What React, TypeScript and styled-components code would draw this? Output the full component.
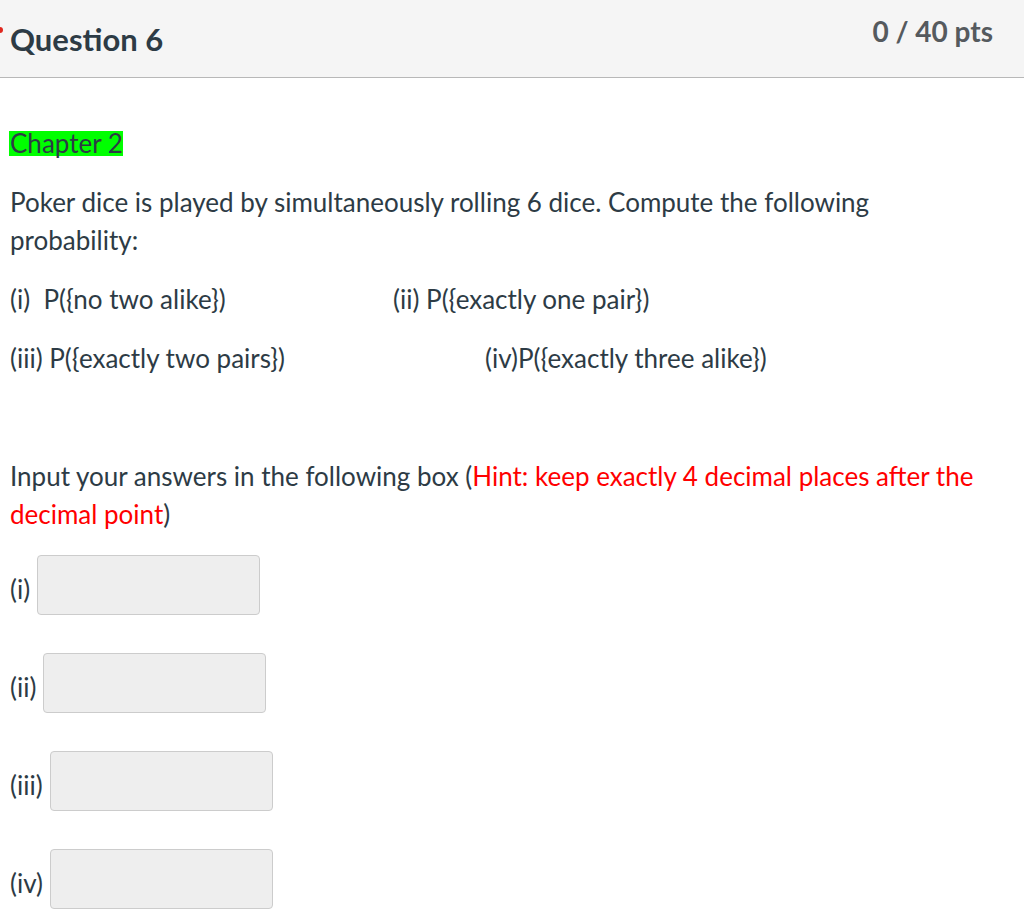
import React from 'react';
import styled, { createGlobalStyle } from 'styled-components';

const GlobalStyle = createGlobalStyle`
  body {
    margin: 0;
    background: #fff;
    font-family: Lato, 'Open Sans', sans-serif;
    color: #2d3b45;
  }
`;

const Header = styled.div`
  position: relative;
  height: 77px;
  background: #f5f5f5;
  border-bottom: 1px solid #b8b8b8;
  display: flex;
  justify-content: space-between;
  align-items: flex-start;
  padding: 0 31px 0 10px;
`;

const Flag = styled.span`
  position: absolute;
  left: -3px;
  top: 27px;
  width: 6px;
  height: 6px;
  border-radius: 50%;
  background: #e0281f;
`;

const Title = styled.h2`
  margin: 0;
  padding-top: 21px;
  font-size: 31px;
  font-weight: 700;
  line-height: 36px;
  color: #2d3b45;
`;

const Points = styled.div`
  padding-top: 13px;
  font-size: 28px;
  font-weight: 700;
  line-height: 36px;
  color: #555a5e;
`;

const Body = styled.div`
  padding: 46px 30px 0 10px;
  font-size: 26px;
  line-height: 38px;
`;

const Para = styled.p`
  margin: 0 0 21px;
  min-height: 38px;
`;

const Highlight = styled.span`
  display: inline-block;
  background: #00ff00;
  line-height: 25px;
  margin-left: -1px;
  padding-left: 1px;
`;

const Red = styled.span`
  color: #ff0000;
`;

const Cell = styled.span<{ $width: number }>`
  display: inline-block;
  width: ${(p) => p.$width}px;
`;

const Answers = styled.div`
  padding-top: 1px;
`;

const AnswerRow = styled.div`
  display: flex;
  align-items: center;
  gap: 7px;
  margin-bottom: 38px;
`;

const Label = styled.span`
  padding-top: 8px;
`;

const AnswerBox = styled.input`
  width: 223px;
  height: 60px;
  box-sizing: border-box;
  background: #eeeeee;
  border: 1px solid #cccccc;
  border-radius: 4px;
  font-family: inherit;
  font-size: 20px;
  padding: 0 10px;
`;

const answers = ['(i)', '(ii)', '(iii)', '(iv)'];

export default function App() {
  return (
    <>
      <GlobalStyle />
      <Header>
        <Flag />
        <Title>Question 6</Title>
        <Points>0 / 40 pts</Points>
      </Header>
      <Body>
        <Para>
          <Highlight>Chapter 2</Highlight>
        </Para>
        <Para>
          Poker dice is played by simultaneously rolling 6 dice. Compute the following
          probability:
        </Para>
        <Para>
          <Cell $width={383}>(i)&nbsp; P({'{'}no two alike{'}'})</Cell>
          (ii) P({'{'}exactly one pair{'}'})
        </Para>
        <Para>
          <Cell $width={475}>(iii) P({'{'}exactly two pairs{'}'})</Cell>
          (iv)P({'{'}exactly three alike{'}'})
        </Para>
        <Para />
        <Para>
          Input your answers in the following box (
          <Red>Hint: keep exactly 4 decimal places after the decimal point</Red>)
        </Para>
        <Answers>
          {answers.map((a) => (
            <AnswerRow key={a}>
              <Label>{a}</Label>
              <AnswerBox type="text" />
            </AnswerRow>
          ))}
        </Answers>
      </Body>
    </>
  );
}
